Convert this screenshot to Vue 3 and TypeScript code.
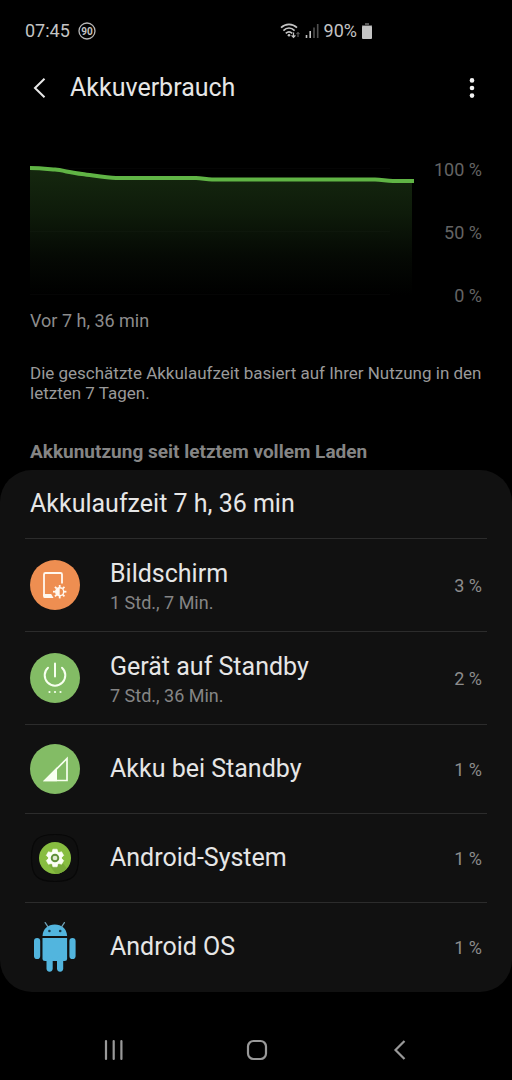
<script setup lang="ts">
type IconName = 'screen' | 'power' | 'signal' | 'system' | 'android'

interface UsageItem {
  name: string
  time?: string
  percent: number
  icon: IconName
}

const items: UsageItem[] = [
  { name: 'Bildschirm', time: '1 Std., 7 Min.', percent: 3, icon: 'screen' },
  { name: 'Gerät auf Standby', time: '7 Std., 36 Min.', percent: 2, icon: 'power' },
  { name: 'Akku bei Standby', percent: 1, icon: 'signal' },
  { name: 'Android-System', percent: 1, icon: 'system' },
  { name: 'Android OS', percent: 1, icon: 'android' },
]

const axis: number[] = [100, 50, 0]
const rays: number[] = [0, 45, 90, 135, 180, 225, 270, 315]
const teeth: number[] = [0, 60, 120, 180, 240, 300]
</script>

<template>
  <div class="screen">
    <div class="status">
      <div class="group">
        <span>07:45</span>
        <svg class="badge" viewBox="0 0 18 18" role="img" aria-label="90">
          <circle cx="9" cy="9" r="8" />
          <text x="9" y="12.500" text-anchor="middle">90</text>
        </svg>
      </div>
      <div class="group right">
        <svg class="wifi" viewBox="0 0 20 16" aria-hidden="true">
          <g fill="none" stroke="#c4c4c4" stroke-width="1.700">
            <path d="M1 4.600C5.600 .2 12.400 .2 17 4.600" />
            <path d="M3.400 7.600C6.800 4.400 11.200 4.400 14.600 7.600" />
            <path d="M5.800 10.400C7.800 8.400 10.200 8.400 12.200 10.400" />
          </g>
          <circle cx="9" cy="12.200" r="1.300" fill="#c4c4c4" />
          <path d="M13.500 9.600v4.600M11.600 12.400l1.900 2 1.900-2" fill="none" stroke="#c4c4c4" stroke-width="1.300" />
          <path d="M18 14V9.600M16.400 11.200L18 9.400l1.600 1.800" fill="none" stroke="#707070" stroke-width="1" />
        </svg>
        <svg class="bars" viewBox="0 0 14 16" aria-hidden="true">
          <path d="M1.500 15v-3M5.200 15V8" stroke="#c4c4c4" stroke-width="1.600" />
          <path d="M9 15V4.500M12.700 15V1" stroke="#505050" stroke-width="1.600" />
        </svg>
        <span>90%</span>
        <svg class="cell" viewBox="0 0 10 16" aria-hidden="true">
          <path d="M3 0h4v2h3v2H0V2h3z" fill="#555" />
          <rect y="3" width="10" height="13" rx="1" fill="#c4c4c4" />
        </svg>
      </div>
    </div>

    <header class="bar">
      <button type="button" class="icon-button" aria-label="Zurück">
        <svg viewBox="0 0 20 20"><path d="M14.500 .8L5 10l9.500 9.200" fill="none" stroke="#e8e8e8" stroke-width="2" /></svg>
      </button>
      <h1>Akkuverbrauch</h1>
      <button type="button" class="icon-button" aria-label="Weitere Optionen">
        <svg viewBox="0 0 20 20" fill="#f2f2f2">
          <circle cx="10" cy="2.400" r="2.300" /><circle cx="10" cy="10" r="2.300" /><circle cx="10" cy="17.600" r="2.300" />
        </svg>
      </button>
    </header>

    <section class="overview">
      <div class="chart">
        <svg class="plot" viewBox="0 0 384 130" preserveAspectRatio="none" role="img" aria-label="Akkustand">
          <defs>
            <linearGradient id="fade" x1="0" y1="0" x2="0" y2="1">
              <stop offset="0" stop-color="#15280f" />
              <stop offset=".35" stop-color="#0e1b0a" />
              <stop offset=".7" stop-color="#050904" />
              <stop offset="1" stop-color="#000" />
            </linearGradient>
          </defs>
          <path d="M0 2L24 4L50 8L84 12H169L179 14H347L360 15H382V129H0Z" fill="url(#fade)" />
          <path d="M0 2.500H360M0 65.500H360M0 128.500H360" stroke="#fff" stroke-opacity=".02" />
          <path class="line" d="M0 2C10 2 18 3 25 3.600S40 6.500 52 8S76 12 86 12H166C172 12 176 13.500 182 13.500H345C352 13.500 356 15 363 15H384" />
        </svg>
        <div class="axis">
          <span v-for="value in axis" :key="value">{{ value }} %</span>
        </div>
      </div>
      <p class="since">Vor 7 h, 36 min</p>
      <p class="note">Die geschätzte Akkulaufzeit basiert auf Ihrer Nutzung in den letzten 7 Tagen.</p>
      <h2>Akkunutzung seit letztem vollem Laden</h2>
    </section>

    <section class="card">
      <h3>Akkulaufzeit 7 h, 36 min</h3>
      <ul>
        <li v-for="item in items" :key="item.name">
          <button type="button" class="row" :class="{ tall: item.time }">
            <svg class="app" viewBox="0 0 50 50" aria-hidden="true">
              <template v-if="item.icon === 'screen'">
                <circle cx="25" cy="25" r="25" fill="#ee8e51" />
                <path d="M32 23.500V14.500a1.500 1.500 0 0 0-1.500-1.500h-15a1.500 1.500 0 0 0-1.500 1.500V36" fill="none" stroke="#fff8ef" stroke-width="1.800" />
                <path d="M13.200 34h8l2.300 4H14.700a1.500 1.500 0 0 1-1.500-1.500z" fill="#fff8ef" />
                <circle cx="29.700" cy="31.700" r="4" fill="none" stroke="#fff8ef" stroke-width="1.400" />
                <path d="M29.700 27.700a4 4 0 0 0 0 8z" fill="#fff8ef" />
                <path v-for="angle in rays" :key="angle" d="M29.700 27.500V25" stroke="#fff8ef" stroke-width="1.800" :transform="`rotate(${angle} 29.700 31.700)`" />
              </template>
              <template v-else-if="item.icon === 'power'">
                <circle cx="25" cy="25" r="25" fill="#83bc65" />
                <path d="M25 10.500V23.500M18 14.800a10.300 10.300 0 1 0 14 0" fill="none" stroke="#f7ffef" stroke-width="2" stroke-linecap="round" />
                <g fill="#f7ffef"><circle cx="19.500" cy="39" r="1.100" /><circle cx="25" cy="39" r="1.100" /><circle cx="30.500" cy="39" r="1.100" /></g>
              </template>
              <template v-else-if="item.icon === 'signal'">
                <circle cx="25" cy="25" r="25" fill="#83bc65" />
                <path d="M15 36.500L37 14.500V36.500Z" fill="none" stroke="#f7ffef" stroke-width="1.700" />
                <path d="M13 37.300L27 23.300V37.300Z" fill="#f7ffef" />
              </template>
              <template v-else-if="item.icon === 'system'">
                <path d="M25 1.500C43 1.500 48.500 7 48.500 25S43 48.500 25 48.500 1.500 43 1.500 25 7 1.500 25 1.500Z" fill="#0f0f0f" stroke="#080808" stroke-width="1.200" />
                <circle cx="25" cy="25" r="16" fill="#87bd40" />
                <path d="M19 32L26 40.900A16 16 0 0 0 37 35.500L32 29Z" fill="#78ab38" />
                <circle cx="25" cy="25" r="6.800" fill="#fbfff5" />
                <path v-for="angle in teeth" :key="angle" d="M22 19.500L22.900 16.200H27.100L28 19.500Z" fill="#fbfff5" stroke="#fbfff5" stroke-width=".6" stroke-linejoin="round" :transform="`rotate(${angle} 25 25)`" />
                <circle cx="25" cy="25" r="3.300" fill="#dfe9d0" stroke="#5f9038" stroke-width="1.900" />
              </template>
              <template v-else>
                <g fill="#52b5de">
                  <path d="M12.500 14C13 6.500 18 2.500 24.800 2.500S36.600 6.500 37.100 14Z" />
                  <path d="M12.500 16H37.100V36.500a2.500 2.500 0 0 1-2.500 2.500H15a2.500 2.500 0 0 1-2.500-2.500Z" />
                  <rect x="4" y="16" width="6.200" height="21" rx="3.100" />
                  <rect x="39.400" y="16" width="6.200" height="21" rx="3.100" />
                  <rect x="16.500" y="34" width="6.200" height="15.700" rx="3.100" />
                  <rect x="27" y="34" width="6.200" height="15.700" rx="3.100" />
                </g>
                <path d="M15.200 .6L18 4.800M34.400 .6L31.600 4.800" stroke="#6c9fb4" stroke-width="1.300" stroke-linecap="round" />
                <circle cx="19.400" cy="9" r="1.300" fill="#16394a" /><circle cx="30.200" cy="9" r="1.300" fill="#16394a" />
              </template>
            </svg>
            <span class="texts">
              <span class="name">{{ item.name }}</span>
              <span v-if="item.time" class="time">{{ item.time }}</span>
            </span>
            <span class="percent">{{ item.percent }} %</span>
          </button>
        </li>
      </ul>
    </section>

    <nav class="nav" aria-label="Navigation">
      <button type="button" aria-label="Letzte Apps">
        <svg viewBox="0 0 22 22"><path d="M3 2V20M10.700 2V20M18.400 2V20" stroke="#999" stroke-width="2.200" stroke-linecap="round" /></svg>
      </button>
      <button type="button" aria-label="Startbildschirm">
        <svg viewBox="0 0 22 22"><rect x="2" y="2" width="18" height="18" rx="5.500" fill="none" stroke="#999" stroke-width="2.200" /></svg>
      </button>
      <button type="button" aria-label="Zurück">
        <svg viewBox="0 0 22 22"><path d="M15.500 2L6.500 11l9 9" fill="none" stroke="#999" stroke-width="2.200" /></svg>
      </button>
    </nav>
  </div>
</template>

<style>
body {
  background: #000;
}
</style>

<style scoped>
.screen {
  min-height: 100vh;
  display: flex;
  flex-direction: column;
  background: #000;
  color: #e6e6e6;
  font-family: Roboto, "Liberation Sans", sans-serif;
}
h1, h2, h3, p, ul {
  margin: 0;
  padding: 0;
  font-weight: 400;
}
button {
  padding: 0;
  border: 0;
  background: none;
  color: inherit;
  font: inherit;
  cursor: pointer;
}
svg {
  display: block;
  flex: none;
}
.status {
  display: flex;
  justify-content: space-between;
  padding: 19px 140px 0 25px;
  font-size: 18px;
  line-height: 24px;
  color: #c4c4c4;
}
.group {
  display: flex;
  align-items: center;
  gap: 8px;
}
.right {
  gap: 5px;
}
.badge {
  width: 18px;
  height: 18px;
}
.badge circle {
  fill: none;
  stroke: #b8b8b8;
  stroke-width: 1.300;
}
.badge text {
  font-size: 10px;
  font-weight: 700;
  fill: #c4c4c4;
}
.wifi {
  width: 20px;
  height: 16px;
}
.bars {
  width: 14px;
  height: 16px;
}
.cell {
  width: 10px;
  height: 16px;
}
.bar {
  display: flex;
  align-items: center;
  padding: 24px 30px 0;
}
.bar h1 {
  flex: 1;
  margin-left: 20px;
  font-size: 25px;
  line-height: 42px;
}
.icon-button svg {
  width: 20px;
  height: 20px;
}
.overview {
  padding: 49px 30px 0;
}
.chart {
  display: flex;
  padding-top: 8px;
  gap: 20px;
}
.plot {
  flex: 1;
  min-width: 0;
  height: 130px;
}
.line {
  fill: none;
  stroke: #60b445;
  stroke-width: 4;
}
.axis {
  display: flex;
  flex-direction: column;
  justify-content: space-between;
  margin: -6px 0 -10px;
  font-size: 18px;
  line-height: 20px;
  text-align: right;
  color: #646464;
}
.since {
  margin-top: 15px;
  font-size: 18px;
  line-height: 20px;
  color: #8c8c8c;
}
.note {
  margin-top: 32px;
  font-size: 17px;
  line-height: 20px;
  color: #9a9a9a;
}
.overview h2 {
  margin-top: 39px;
  font-size: 19px;
  line-height: 20px;
  font-weight: 700;
  color: #858585;
}
.card {
  margin-top: 8px;
  padding: 0 25px 1px;
  border-radius: 32px;
  background: #111;
}
.card h3 {
  padding: 0 5px;
  font-size: 25px;
  line-height: 68px;
}
.card ul {
  list-style: none;
}
.card li {
  border-top: 1px solid #2c2c2c;
}
.row {
  width: 100%;
  min-height: 88px;
  display: flex;
  align-items: center;
  padding: 0 5px;
  text-align: left;
}
.tall {
  min-height: 92px;
}
.app {
  width: 50px;
  height: 50px;
}
.texts {
  flex: 1;
  margin-left: 30px;
}
.tall .texts {
  padding-top: 4px;
}
.name, .time {
  display: block;
}
.name {
  font-size: 25px;
  line-height: 32px;
}
.time {
  font-size: 18px;
  line-height: 26px;
  color: #858585;
}
.percent {
  font-size: 18px;
  color: #8c8c8c;
}
.nav {
  display: flex;
  justify-content: space-between;
  margin-top: auto;
  padding: 0 101px 19px 103px;
}
.nav svg {
  width: 22px;
  height: 22px;
}
</style>
